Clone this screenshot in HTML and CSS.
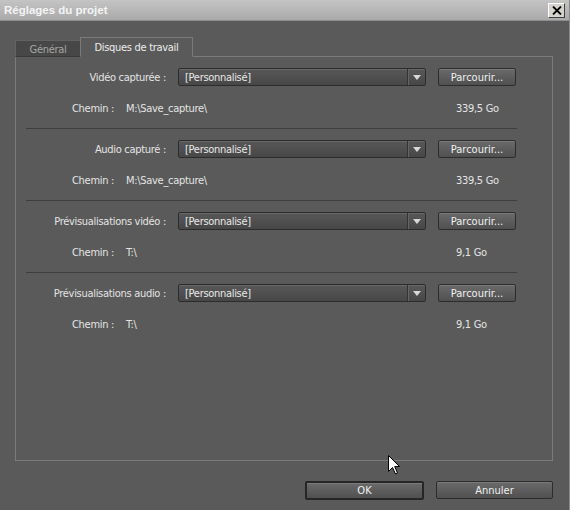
FILE: index.html
```html
<!DOCTYPE html>
<html lang="fr">
<head>
<meta charset="utf-8">
<title>Réglages du projet</title>
<link rel="stylesheet" href="styles.css">
</head>
<body>
<div class="window">
  <div class="titlebar">
    <span class="title">Réglages du projet</span>
    <span class="close"><svg width="10" height="9" viewBox="0 0 10 9"><path d="M1 0.5 L9 8.5 M9 0.5 L1 8.5" stroke="#000" stroke-width="1.8" fill="none"/></svg></span>
  </div>
  <div class="content">
    <div class="tabs">
      <div class="tab">Général</div>
      <div class="tab active">Disques de travail</div>
    </div>
    <div class="panel">
      <div class="section">
        <div class="controls">
          <span class="label">Vidéo capturée :</span>
          <div class="select"><span class="value">[Personnalisé]</span><span class="arrow"></span></div>
          <button class="btn">Parcourir...</button>
        </div>
        <div class="path"><span class="p-label">Chemin :</span><span class="p-value">M:\Save_capture\</span><span class="p-size">339,5 Go</span></div>
      </div>
      <div class="section">
        <div class="controls">
          <span class="label">Audio capturé :</span>
          <div class="select"><span class="value">[Personnalisé]</span><span class="arrow"></span></div>
          <button class="btn">Parcourir...</button>
        </div>
        <div class="path"><span class="p-label">Chemin :</span><span class="p-value">M:\Save_capture\</span><span class="p-size">339,5 Go</span></div>
      </div>
      <div class="section">
        <div class="controls">
          <span class="label">Prévisualisations vidéo :</span>
          <div class="select"><span class="value">[Personnalisé]</span><span class="arrow"></span></div>
          <button class="btn">Parcourir...</button>
        </div>
        <div class="path"><span class="p-label">Chemin :</span><span class="p-value">T:\</span><span class="p-size">9,1 Go</span></div>
      </div>
      <div class="section">
        <div class="controls">
          <span class="label">Prévisualisations audio :</span>
          <div class="select"><span class="value">[Personnalisé]</span><span class="arrow"></span></div>
          <button class="btn">Parcourir...</button>
        </div>
        <div class="path"><span class="p-label">Chemin :</span><span class="p-value">T:\</span><span class="p-size">9,1 Go</span></div>
      </div>
    </div>
    <div class="footer">
      <button class="btn big default">OK</button>
      <button class="btn big">Annuler</button>
    </div>
  </div>
  <svg class="cursor" width="13" height="20" viewBox="0 0 13 20"><path d="M0.5 0.5 L0.5 16.5 L4.5 12.5 L7.5 19 L9.5 18 L6.7 11.6 L11.5 11.5 Z" fill="#fff" stroke="#000" stroke-width="1"/></svg>
</div>
</body>
</html>
```
FILE: styles.css
```css
* { box-sizing: border-box; }
html, body { margin: 0; padding: 0; }
body {
  width: 570px;
  height: 510px;
  background: #5a5a5a;
  font-family: "DejaVu Sans Condensed", "Liberation Sans", sans-serif;
  font-size: 11px;
  letter-spacing: -0.3px;
  color: #e4e4e4;
  overflow: hidden;
}
.window {
  position: relative;
  width: 570px;
  height: 510px;
  border-right: 1px solid #8a8a8a;
}
.titlebar {
  height: 21px;
  display: flex;
  align-items: center;
  padding: 0 4px 0 4px;
  background: linear-gradient(#c4c4c4, #aaaaaa);
  border-bottom: 1px solid #8e8e8e;
}
.title {
  font-family: "Liberation Sans", sans-serif;
  font-weight: bold;
  font-size: 11.5px;
  letter-spacing: 0;
  color: #f4f4f4;
}
.close {
  margin-left: auto;
  width: 17px;
  height: 15px;
  background: #d6d3cd;
  border-top: 1px solid #fff;
  border-left: 1px solid #fff;
  border-right: 1px solid #404040;
  border-bottom: 1px solid #404040;
  display: flex;
  align-items: center;
  justify-content: center;
}
.content {
  padding: 16px 16px 0 15px;
}
.tabs {
  display: flex;
  align-items: flex-end;
  height: 20px;
  position: relative;
  z-index: 1;
  margin-bottom: -1px;
}
.tab {
  height: 17px;
  width: 65px;
  display: flex;
  align-items: center;
  justify-content: center;
  background: #474747;
  color: #a6a6a6;
  border-top: 1px solid #626262;
  border-left: 1px solid #626262;
  border-bottom: 1px solid #3a3a3a;
  padding-top: 1px;
}
.tab.active {
  height: 20px;
  width: 113px;
  background: #5a5a5a;
  color: #ececec;
  border: 1px solid #7a7a7a;
  border-bottom: 1px solid #5a5a5a;
  padding-top: 0;
}
.panel {
  height: 405px;
  border: 1px solid #7b7b7b;
  padding: 0 35px 0 10px;
}
.section {
  padding: 11px 0 13px 0;
}
.section + .section {
  border-top: 1px solid #3e3e3e;
}
.controls {
  display: flex;
  align-items: center;
  height: 18px;
}
.label {
  width: 140px;
  text-align: right;
  margin-right: 12px;
}
.select {
  width: 248px;
  height: 18px;
  margin-right: 12px;
  display: flex;
  align-items: center;
  border: 1px solid #2c2c2c;
  border-radius: 2px;
  background: linear-gradient(#585858, #474747);
  box-shadow: inset 0 1px 0 #676767;
}
.select .value {
  flex: 1;
  padding-left: 6px;
  color: #e8e8e8;
}
.select .arrow {
  width: 18px;
  height: 16px;
  border-left: 1px solid #333;
  box-shadow: inset 1px 0 0 #666;
  position: relative;
}
.select .arrow::after {
  content: "";
  position: absolute;
  left: 5px;
  top: 6px;
  border-left: 4px solid transparent;
  border-right: 4px solid transparent;
  border-top: 5px solid #d8d8d8;
}
.btn {
  width: 78px;
  height: 18px;
  padding: 0;
  font-family: inherit;
  font-size: 11px;
  letter-spacing: 0;
  color: #f0f0f0;
  border: 1px solid #2c2c2c;
  border-radius: 2px;
  background: linear-gradient(#6a6a6a, #505050);
  box-shadow: inset 0 1px 0 #7a7a7a;
}
.path {
  display: flex;
  align-items: center;
  height: 14px;
  margin-top: 15px;
  padding-left: 46px;
}
.p-label { width: 54px; }
.p-value { width: 330px; }
.footer {
  display: flex;
  justify-content: flex-end;
  gap: 12px;
  margin-top: 20px;
}
.btn.big {
  width: 117px;
  height: 18px;
}
.btn.default {
  width: 119px;
  height: 19px;
  border: 2px solid #262626;
}
.cursor {
  position: absolute;
  left: 388px;
  top: 455px;
}
```
